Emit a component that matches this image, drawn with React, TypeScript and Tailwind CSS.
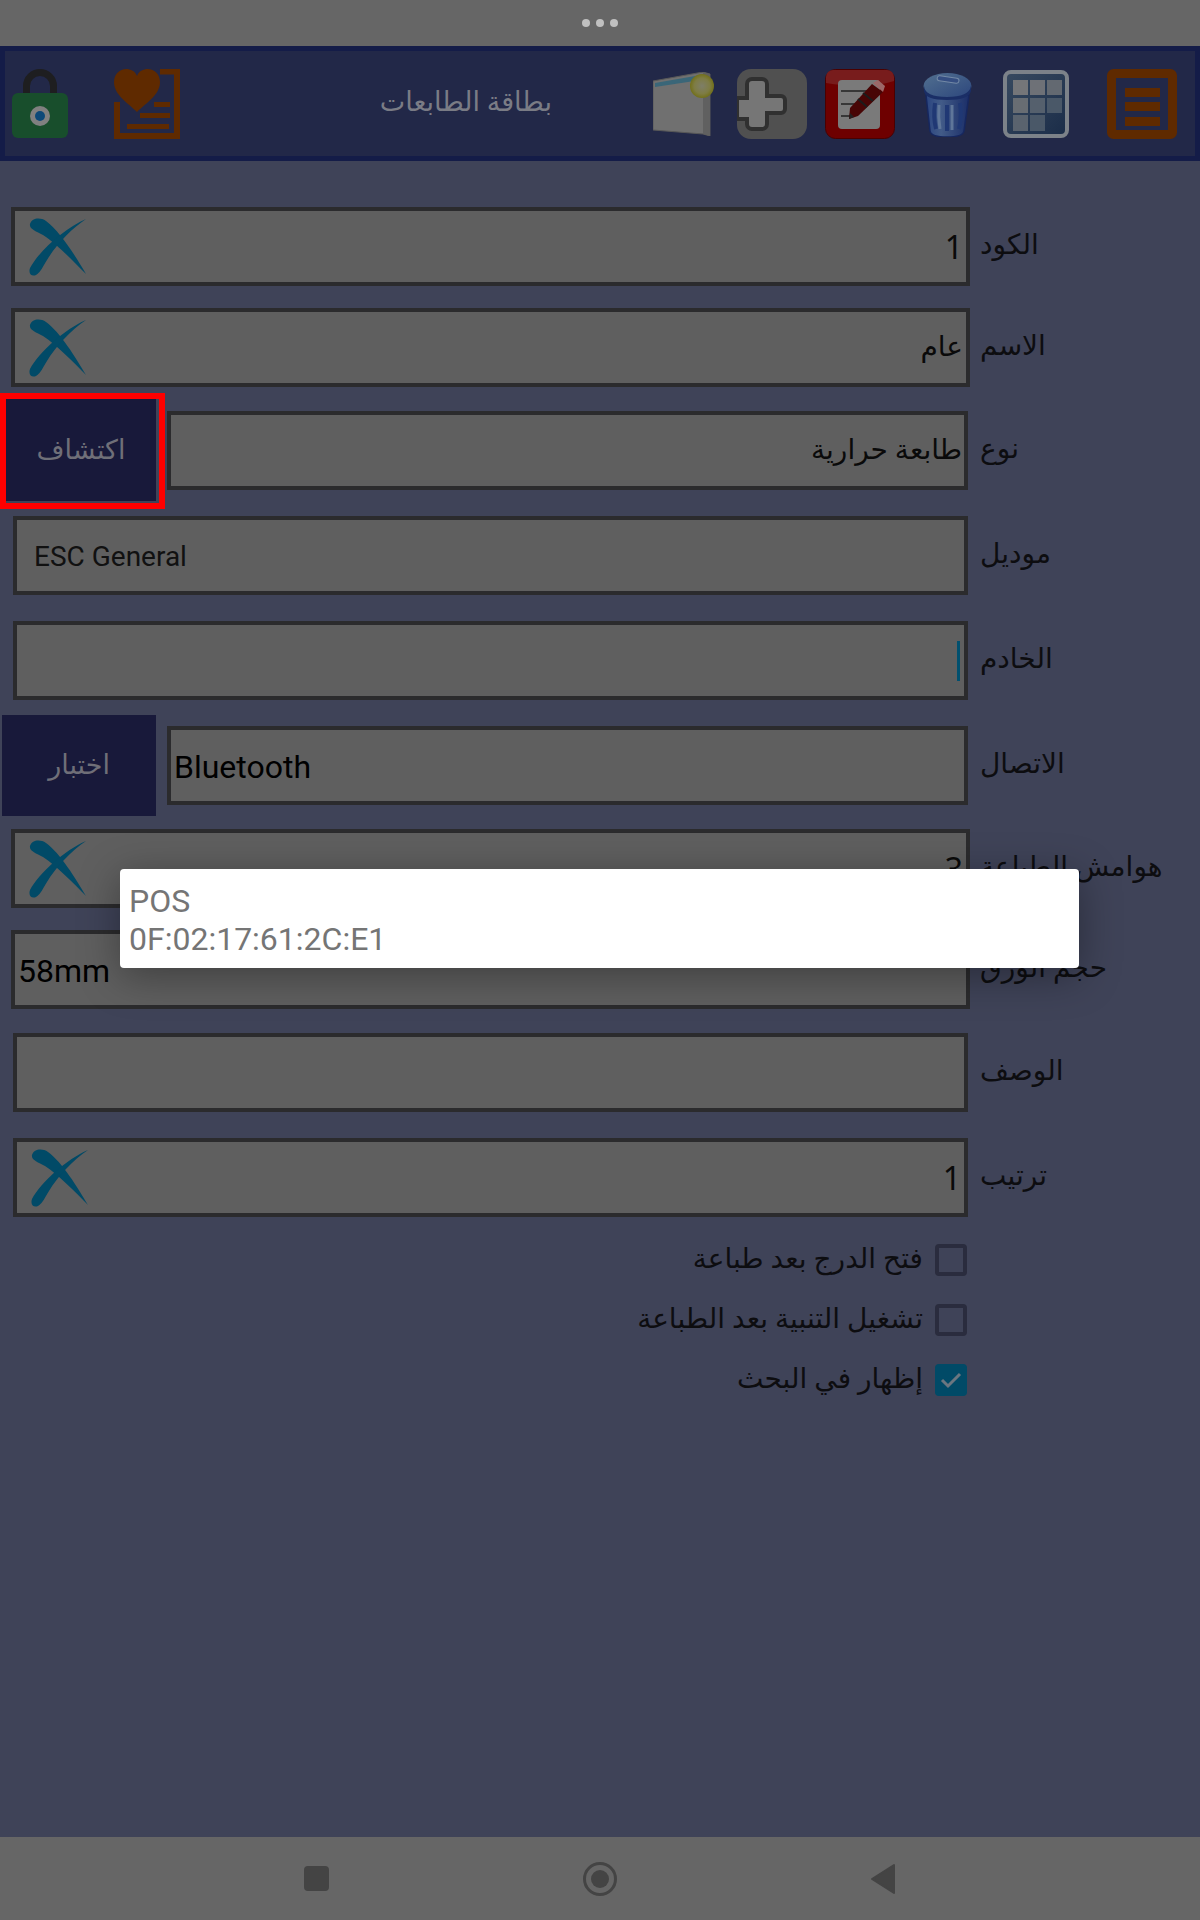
import React from 'react';

const LockIcon = () => (
  <svg width="56" height="70" viewBox="0 0 56 70" className="shrink-0">
    <path d="M14.500 26V17a13.500 13.500 0 0 1 27 0v9" fill="none" stroke="#1e1e20" strokeWidth="7" />
    <rect x="0" y="24" width="56" height="45" rx="6" fill="#184e2c" />
    <circle cx="28" cy="47" r="10" fill="#808080" />
    <circle cx="28" cy="47" r="5" fill="#0c4878" />
  </svg>
);

const HeartDocIcon = () => (
  <svg width="66" height="70" viewBox="0 0 66 70" className="shrink-0">
    <path d="M46 2.500H63V67H3V33" fill="none" stroke="#5f2a00" strokeWidth="6" />
    <path d="M23 43C14 34 0 26 0 13 0 5 6 0 12 0c5 0 9 2 11 7 2-5 6-7 11-7 6 0 12 5 12 13 0 13-14 21-23 30z" fill="#5f2a00" />
    <rect x="40" y="33" width="16" height="5" fill="#5f2a00" />
    <rect x="26" y="44" width="30" height="5" fill="#5f2a00" />
    <rect x="13" y="55" width="42" height="5" fill="#5f2a00" />
  </svg>
);

const WindowIcon = () => (
  <svg width="61" height="64" viewBox="0 0 61 64" className="shrink-0">
    <defs>
      <radialGradient id="glow">
        <stop offset="0%" stopColor="#7e7e68" />
        <stop offset="65%" stopColor="#7e7c44" />
        <stop offset="100%" stopColor="#72701a" />
      </radialGradient>
    </defs>
    <path d="M0 9L50 0 57 2V64L50 62 0 58z" fill="#707070" stroke="#585858" strokeWidth="1" />
    <path d="M50 0L57 2V64L50 62z" fill="#606060" />
    <path d="M2 11L48 3V8L2 15z" fill="#3a6678" />
    <circle cx="49" cy="14" r="12" fill="url(#glow)" />
  </svg>
);

const PlusIcon = () => (
  <svg width="70" height="70" viewBox="0 0 70 70" className="shrink-0">
    <rect width="70" height="70" rx="14" fill="#505050" />
    <path d="M0 29H10V15a5 5 0 0 1 5-5H25a5 5 0 0 1 5 5V27H44a4 4 0 0 1 4 4V40a4 4 0 0 1-4 4H30V55a5 5 0 0 1-5 5H15a5 5 0 0 1-5-5V50H0z" fill="#767676" stroke="#303030" strokeWidth="4" />
  </svg>
);

const NotepadIcon = () => (
  <svg width="70" height="70" viewBox="0 0 70 70" className="shrink-0">
    <rect x="0.500" y="0.500" width="69" height="69" rx="10" fill="#6e0000" stroke="#4a0000" />
    <path d="M8 1H62a7 7 0 0 1 7 7V12C50 18 25 18 1 14V8a7 7 0 0 1 7-7z" fill="#781c1c" />
    <rect x="13" y="11" width="42" height="49" rx="4" fill="#7a7a7a" />
    <path d="M16 22H48M16 35H40M16 47H27" stroke="#222" strokeWidth="1.500" />
    <path d="M47 15L58 23 33 47 24 50 25 39z" fill="#480505" />
    <path d="M48 14L53 11 60 17 58 23z" fill="#9c6868" />
    <path d="M33 30L42 38M38 24L48 32" stroke="#1c1c1c" strokeWidth="2" />
    <path d="M24 50L25 44 29 48z" fill="#222" />
  </svg>
);

const TrashIcon = () => (
  <svg width="49" height="66" viewBox="0 0 49 66" className="shrink-0">
    <defs>
      <linearGradient id="binBody" x1="0" y1="0" x2="1" y2="0">
        <stop offset="0%" stopColor="#2a4480" />
        <stop offset="35%" stopColor="#425b88" />
        <stop offset="100%" stopColor="#1b2e68" />
      </linearGradient>
      <linearGradient id="binLid" x1="0" y1="0" x2="1" y2="1">
        <stop offset="0%" stopColor="#527090" />
        <stop offset="100%" stopColor="#2b457c" />
      </linearGradient>
    </defs>
    <path d="M3 24L7 60Q8 66 24 66T41 60L46 24z" fill="url(#binBody)" stroke="#16275f" strokeWidth="1.500" />
    <path d="M12 32Q10 46 13 58M24 34V60M37 32Q39 46 36 58" stroke="#203874" strokeWidth="4" fill="none" />
    <path d="M16 34Q15 46 17 58M29 34V59" stroke="#5f7699" strokeWidth="3" fill="none" />
    <ellipse cx="24.500" cy="15" rx="24" ry="13" fill="url(#binLid)" />
    <path d="M1 15V20Q2 29 24 29T48 20V15Q46 26 24 26T1 15z" fill="#1a2e66" />
    <rect x="14" y="6" width="22" height="5" rx="2.500" fill="#354e82" stroke="#7389a6" transform="rotate(8 25 9)" />
  </svg>
);

const GridIcon = () => (
  <svg width="66" height="68" viewBox="0 0 66 68" className="shrink-0">
    <defs>
      <linearGradient id="gridBg" x1="0" y1="0" x2="1" y2="1">
        <stop offset="0%" stopColor="#384a60" />
        <stop offset="100%" stopColor="#1a2c48" />
      </linearGradient>
    </defs>
    <rect x="2" y="2" width="62" height="64" rx="6" fill="url(#gridBg)" stroke="#7c8289" strokeWidth="4" />
    <rect x="10" y="10" width="15" height="15" fill="#757679" />
    <rect x="27" y="10" width="15" height="15" fill="#6e7177" />
    <rect x="44" y="10" width="15" height="15" fill="#636971" />
    <rect x="10" y="28" width="15" height="15" fill="#686d73" />
    <rect x="27" y="28" width="15" height="15" fill="#55606d" />
    <rect x="44" y="28" width="15" height="15" fill="#4a5868" />
    <rect x="10" y="45" width="15" height="16" fill="#5a636e" />
    <rect x="27" y="45" width="15" height="16" fill="#4a5868" />
  </svg>
);

const MenuIcon = () => (
  <svg width="70" height="70" viewBox="0 0 70 70" className="shrink-0">
    <rect x="4.500" y="4.500" width="61" height="61" rx="2" fill="none" stroke="#5f2a00" strokeWidth="9" />
    <rect x="18" y="19" width="35" height="9" fill="#5f2a00" />
    <rect x="18" y="33" width="35" height="9" fill="#5f2a00" />
    <rect x="18" y="48" width="35" height="9" fill="#5f2a00" />
  </svg>
);

const ClearIcon = () => (
  <svg width="58" height="58" viewBox="0 0 58 58" className="shrink-0">
    <path d="M1 6C3 0 11-1 17 3 31 13 47 39 57 56 45 44 28 26 14 17 7 13 0 11 1 6z" fill="#014a67" />
    <path d="M57 1C36 10 10 33 1 50c-2 6 2 9 6 7 5-3 7-9 11-15C27 27 42 11 57 1z" fill="#014a67" />
  </svg>
);

const CheckRow: React.FC<{ label: string; checked?: boolean; className: string }> = ({ label, checked, className }) => (
  <div className={`flex items-center justify-end ${className}`}>
    <span className="text-[28px] leading-none text-[#0d0d10] mr-[12px] pb-[2px]" dir="rtl">{label}</span>
    {checked ? (
      <div className="w-8 h-8 rounded-[4px] bg-[#014a67] flex items-center justify-center">
        <svg width="22" height="18" viewBox="0 0 22 18">
          <path d="M2 9l6 6L20 3" fill="none" stroke="#6c7680" strokeWidth="3" />
        </svg>
      </div>
    ) : (
      <div className="w-8 h-8 rounded-[4px] border-4 border-[#2a2c3e]" />
    )}
  </div>
);

const fieldBox = 'h-[79px] border-4 border-[#2b2b2d] bg-[#5f5f5f] flex items-center text-[#0a0a0a]';
const digit = "font-['Noto_Sans'] text-[32px] leading-none";
const arabicValue = 'text-[28px] leading-none pb-[2px]';
const buttonText = 'text-[27px] leading-none text-[#6f6f78]';

const Label: React.FC<{ text: string; wide?: boolean }> = ({ text, wide }) => (
  <span
    className={`${wide ? 'ml-[10px]' : 'ml-[12px]'} pb-[3px] text-[28px] leading-none text-[#0d0d10] whitespace-nowrap`}
    dir="rtl"
  >
    {text}
  </span>
);

const App: React.FC = () => {
  return (
    <div className="relative w-[1200px] h-[1920px] flex flex-col bg-[#3f4358] font-['Roboto','DejaVu_Sans',sans-serif] overflow-hidden">
      {/* Status strip */}
      <div className="h-[46px] bg-[#666666] flex items-center justify-center gap-[6px] shrink-0">
        <span className="w-[8px] h-[8px] rounded-full bg-[#c0c0c0]" />
        <span className="w-[8px] h-[8px] rounded-full bg-[#c0c0c0]" />
        <span className="w-[8px] h-[8px] rounded-full bg-[#c0c0c0]" />
      </div>

      {/* Toolbar */}
      <div className="h-[115px] shrink-0 border-[5px] border-[#141c48] bg-[#222848] flex items-center">
        <div className="ml-[7px]"><LockIcon /></div>
        <div className="ml-[46px]"><HeartDocIcon /></div>
        <div className="ml-[203px] w-[169px] pb-[2px] text-[27px] leading-none text-[#7a7c85] whitespace-nowrap text-center" dir="rtl">بطاقة الطابعات</div>
        <div className="ml-[101px]"><WindowIcon /></div>
        <div className="ml-[23px]"><PlusIcon /></div>
        <div className="ml-[18px]"><NotepadIcon /></div>
        <div className="ml-[28px]"><TrashIcon /></div>
        <div className="ml-[31px]"><GridIcon /></div>
        <div className="ml-[38px]"><MenuIcon /></div>
      </div>

      {/* Form */}
      <div className="flex-1 flex flex-col pt-[46px]">
        <div className="flex items-center">
          <div className={`${fieldBox} ml-[11px] w-[959px] justify-between pl-[14px] pr-[3px]`}>
            <ClearIcon />
            <span className={digit}>1</span>
          </div>
          <Label text="الكود" wide />
        </div>

        <div className="flex items-center mt-[22px]">
          <div className={`${fieldBox} ml-[11px] w-[959px] justify-between pl-[14px] pr-[3px]`}>
            <ClearIcon />
            <span className={arabicValue} dir="rtl">عام</span>
          </div>
          <Label text="الاسم" wide />
        </div>

        <div className="flex items-center mt-[24px]">
          <div className="w-[165px] h-[116px] -mt-[18px] -mb-[19px] shrink-0 border-[6px] border-[#ff0000] pr-[3px] pb-[2px]">
            <div className={`h-full bg-[#18193a] flex items-center justify-center ${buttonText}`} dir="rtl">اكتشاف</div>
          </div>
          <div className={`${fieldBox} ml-[2px] w-[801px] justify-end pr-[2px]`}>
            <span className={arabicValue} dir="rtl">طابعة حرارية</span>
          </div>
          <Label text="نوع" />
        </div>

        <div className="flex items-center mt-[26px]">
          <div className={`${fieldBox} ml-[13px] w-[955px] pl-[17px]`}>
            <span className="text-[28px] leading-none pt-[2px] text-[#111111]">ESC General</span>
          </div>
          <Label text="موديل" />
        </div>

        <div className="flex items-center mt-[26px]">
          <div className={`${fieldBox} ml-[13px] w-[955px] justify-end pr-[4px]`}>
            <span className="w-[3px] h-[40px] bg-[#01506f]" />
          </div>
          <Label text="الخادم" />
        </div>

        <div className="flex items-center mt-[26px]">
          <div className={`ml-[2px] w-[154px] h-[101px] -my-[11px] shrink-0 bg-[#18193a] flex items-center justify-center ${buttonText}`} dir="rtl">اختبار</div>
          <div className={`${fieldBox} ml-[11px] w-[801px] pl-[3px]`}>
            <span className="text-[32px] leading-none pt-[2px] text-black">Bluetooth</span>
          </div>
          <Label text="الاتصال" />
        </div>

        <div className="flex items-center mt-[24px]">
          <div className={`${fieldBox} ml-[11px] w-[959px] justify-between pl-[14px] pr-[3px]`}>
            <ClearIcon />
            <span className={digit}>3</span>
          </div>
          <Label text="هوامش الطباعة" wide />
        </div>

        <div className="flex items-center mt-[22px]">
          <div className={`${fieldBox} ml-[11px] w-[959px] pl-[3px]`}>
            <span className="text-[32px] leading-none pt-[2px] text-black">58mm</span>
          </div>
          <Label text="حجم الورق" wide />
        </div>

        <div className="flex items-center mt-[24px]">
          <div className={`${fieldBox} ml-[13px] w-[955px]`} />
          <Label text="الوصف" />
        </div>

        <div className="flex items-center mt-[26px]">
          <div className={`${fieldBox} ml-[13px] w-[955px] justify-between pl-[14px] pr-[3px]`}>
            <ClearIcon />
            <span className={digit}>1</span>
          </div>
          <Label text="ترتيب" />
        </div>

        <div className="w-[967px] mt-[27px] flex flex-col">
          <CheckRow label="فتح الدرج بعد طباعة" className="" />
          <CheckRow label="تشغيل التنبية بعد الطباعة" className="mt-[28px]" />
          <CheckRow label="إظهار في البحث" checked className="mt-[28px]" />
        </div>
      </div>

      {/* Nav bar */}
      <div className="h-[83px] shrink-0 bg-[#666666] flex items-center justify-center">
        <svg width="620" height="40" viewBox="0 0 620 40">
          <rect x="14" y="7" width="25" height="25" rx="4" fill="#444444" />
          <circle cx="310" cy="20" r="15.500" fill="none" stroke="#444444" strokeWidth="3" />
          <circle cx="310" cy="20" r="9" fill="#444444" />
          <path d="M604 6V34L582 20z" fill="#444444" stroke="#444444" strokeWidth="2" strokeLinejoin="round" />
        </svg>
      </div>

      {/* Device picker dialog */}
      <div className="absolute left-[120px] top-[869px] w-[959px] h-[99px] bg-white rounded-[4px] shadow-[0_8px_40px_rgba(0,0,0,0.35)] pl-[9px] pt-[13px] text-[32px] leading-[38px] text-[#757575]">
        <div>POS</div>
        <div>0F:02:17:61:2C:E1</div>
      </div>
    </div>
  );
};

export default App;
